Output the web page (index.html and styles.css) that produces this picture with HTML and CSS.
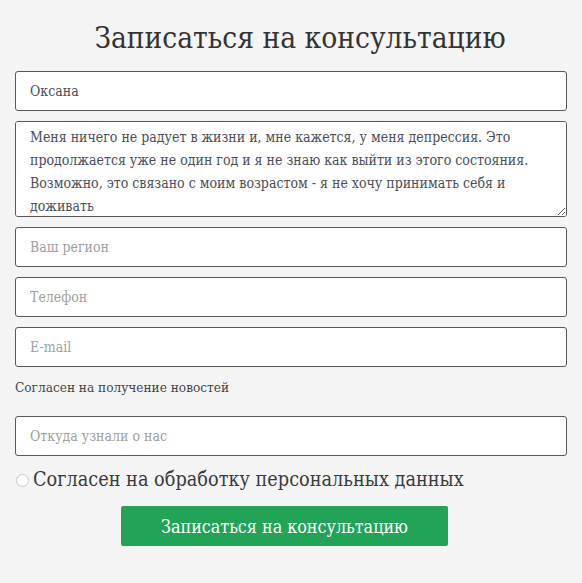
FILE: index.html
```html
<!DOCTYPE html>
<html lang="ru">
<head>
<meta charset="utf-8">
<title>Записаться на консультацию</title>
<link rel="stylesheet" href="styles.css">
</head>
<body>
<form class="form">
  <h2 class="title">Записаться на консультацию</h2>
  <input class="field" type="text" value="Оксана">
  <textarea class="field area">Меня ничего не радует в жизни и, мне кажется, у меня депрессия. Это продолжается уже не один год и я не знаю как выйти из этого состояния. Возможно, это связано с моим возрастом - я не хочу принимать себя и доживать</textarea>
  <input class="field" type="text" placeholder="Ваш регион">
  <input class="field" type="text" placeholder="Телефон">
  <input class="field" type="text" placeholder="E-mail">
  <p class="news">Согласен на получение новостей</p>
  <input class="field" type="text" placeholder="Откуда узнали о нас">
  <label class="agree"><span class="radio"></span>Согласен на обработку персональных данных</label>
  <button class="submit" type="button">Записаться на консультацию</button>
</form>
</body>
</html>
```
FILE: styles.css
```css
html, body {
  margin: 0;
  padding: 0;
  background: #f4f4f4;
}
body {
  font-family: "DejaVu Serif Condensed", "DejaVu Serif", serif;
  font-stretch: condensed;
  color: #3a3a3a;
}
.form {
  padding: 20px 15px 30px;
  display: flex;
  flex-direction: column;
}
.title {
  margin: 0 0 15px;
  font-weight: normal;
  font-size: 29.6px;
  line-height: 36px;
  text-align: center;
  color: #333;
  padding-left: 18px;
}
.field {
  display: block;
  box-sizing: border-box;
  width: 100%;
  height: 40px;
  margin: 0 0 10px;
  padding: 0 14px;
  border: 1px solid #55575a;
  border-radius: 3px;
  background: #fff;
  font-family: "DejaVu Serif Condensed", "DejaVu Serif", serif;
  font-stretch: condensed;
  font-size: 14px;
  color: #4a4d57;
}
.field::placeholder {
  color: #a0a0a0;
}
.area {
  height: 96px;
  padding: 4px 14px;
  line-height: 23px;
  resize: vertical;
}
.news {
  margin: 1px 0 20px;
  font-size: 13.5px;
  line-height: 18px;
  color: #444;
}
.agree {
  display: flex;
  align-items: center;
  margin: 2px 0 14px;
  font-size: 19.7px;
  line-height: 24px;
  color: #3a3a3a;
}
.radio {
  width: 11px;
  height: 11px;
  border: 1px solid #c9c9c9;
  border-radius: 50%;
  background: #fff;
  margin: 0 4px 0 1px;
}
.submit {
  align-self: flex-start;
  margin-left: 106px;
  width: 327px;
  height: 40px;
  border: none;
  border-radius: 2px;
  background: #22a457;
  color: #fff;
  font-family: "DejaVu Serif Condensed", "DejaVu Serif", serif;
  font-stretch: condensed;
  font-size: 17.8px;
}
```
